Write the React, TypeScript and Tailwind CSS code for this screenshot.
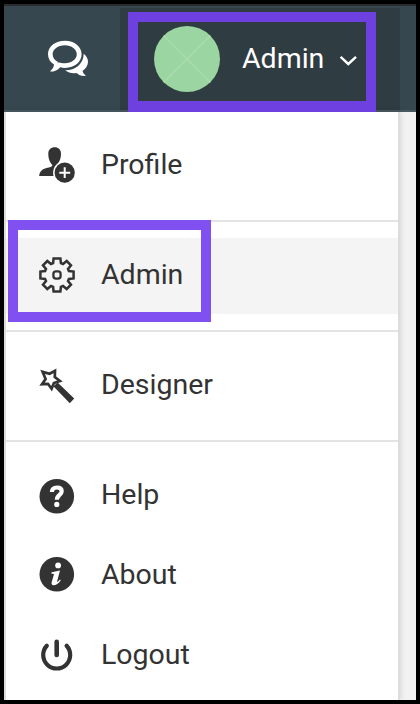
import type { ReactNode } from "react";

const ink = "#333333";

function ChatIcon() {
  return (
    <svg width="42" height="38" viewBox="47 40 42 38" fill="#fff">
      <path
        fillRule="evenodd"
        d="M65 40.8C55.4 40.8 48 46.6 48 54.2C48 58.5 50.2 62.2 54 64.6C53.8 67.4 52.3 69.4 50 71.6C54 71.8 57.6 70.4 60.2 67.2C61.8 67.7 63.4 67.9 65 67.9C74.6 67.9 81.6 61.9 81.6 54.3C81.6 46.7 74.6 40.8 65 40.8ZM64.8 45.3C71.6 45.3 76.8 49.3 76.8 54.3C76.8 59.3 71.6 63.2 64.8 63.2C62.4 63.2 60.5 62.9 58.7 62.2L57.6 63.6L58 62C54.6 60.2 52.6 57.5 52.6 54.3C52.6 49.3 58 45.3 64.8 45.3Z"
      />
      <path d="M83.7 53.8C86.5 56 88 58.8 88 61.8C88 65.3 86 68.6 82.6 70.8C82.8 72.8 84 74.3 86 75.8C82 76.3 78.9 75.2 76.7 73C72.6 74 68.4 72.8 65.2 70.3C75 70.5 83.5 64.5 83.7 53.8Z" />
    </svg>
  );
}

function ProfileIcon() {
  return (
    <svg className="relative -top-px" width="36" height="36" viewBox="39 146.5 36 36" fill={ink}>
      <path d="M54.7 146.7C58.6 146.7 61 149.3 61 153.2C61 157.6 59.5 161.2 57.5 163.4C56 165.5 54.8 168.5 54.2 172L54.1 175.4H39.2C39.5 171 42.4 168.6 46.5 167.5C50 166.6 52.2 166.4 52.4 164.4C50 162.4 48.3 158.2 48.3 153.2C48.3 149.3 50.8 146.7 54.7 146.7Z" />
      <circle cx="64.7" cy="172.2" r="11.6" fill="#fff" />
      <circle cx="64.7" cy="172.2" r="10.1" />
      <path d="M59.3 172.2H70.2M64.7 166.8V177.6" stroke="#fff" strokeWidth="2" />
    </svg>
  );
}

function GearIcon() {
  return (
    <svg className="relative -top-[1.5px]" width="36" height="36" viewBox="0 0 36 36" fill="none" stroke={ink} strokeWidth="2.5">
      <path d="M14.6 1.4H21.4L21.9 6.1L24 7L27.7 4L32 8.3L29 12L29.9 14.1L34.6 14.6V21.4L29.9 21.9L29 24L32 27.7L27.7 32L24 29L21.9 29.9L21.4 34.6H14.6L14.1 29.9L12 29L8.3 32L4 27.7L7 24L6.1 21.9L1.4 21.4V14.6L6.1 14.1L7 12L4 8.3L8.3 4L12 7L14.1 6.1Z" />
      <rect x="14.4" y="14.4" width="7.2" height="7.2" rx="2.6" strokeWidth="2.3" />
    </svg>
  );
}

function WandIcon() {
  return (
    <svg width="36" height="36" viewBox="39 368.5 36 36">
      <path
        d="M42.6 372.4L49.6 374.3L55 371.3L54.8 377.6L59.9 381.5L53.9 383.5L51.6 389.2L48 384.3L42 384.7L45.6 379.5Z"
        fill="none"
        stroke={ink}
        strokeWidth="2.7"
      />
      <path d="M53.4 386.8L57.6 383L74.2 399L69.8 403.8Z" fill={ink} />
    </svg>
  );
}

function HelpIcon() {
  return (
    <svg width="36" height="36" viewBox="0 0 36 36" fill="none">
      <circle cx="17.8" cy="18.3" r="17.3" fill={ink} />
      <path
        d="M12.9 14C13 10.9 15 9.5 18 9.5C21 9.5 22.7 11 22.7 13.3C22.7 17 17.9 16.8 17.9 21.8"
        stroke="#fff"
        strokeWidth="4.2"
      />
      <circle cx="17.8" cy="26.4" r="2.6" fill="#fff" />
    </svg>
  );
}

function AboutIcon() {
  return (
    <svg className="relative -top-[2px]" width="36" height="36" viewBox="0 0 36 36" fill="none">
      <circle cx="17.8" cy="18.3" r="17.3" fill={ink} />
      <circle cx="19.1" cy="9.4" r="2.9" fill="#fff" />
      <path
        d="M12.6 16.2L21 14.4L18.2 25C18 26 18.4 26.1 19.1 25.5L21 23.6L21.7 24.4C19.7 27.4 17 29.2 14.6 29.2C12.8 29.2 12.2 27.8 12.7 26L14.9 18.5C15.1 17.8 14.5 17.6 12.3 17.8Z"
        fill="#fff"
      />
    </svg>
  );
}

function PowerIcon() {
  return (
    <svg className="relative -top-[1.5px]" width="36" height="36" viewBox="39 636.5 36 36" fill="none" stroke={ink} strokeLinecap="round">
      <path d="M46.8 645.3A13.5 13.5 0 1 0 66.6 645.3" strokeWidth="4.2" />
      <path d="M56.7 641.2V654.5" strokeWidth="4.6" />
    </svg>
  );
}

function MenuItem({ icon, label, active = false }: { icon: ReactNode; label: string; active?: boolean }) {
  return (
    <li className={`flex h-[76px] items-center gap-[26px] pl-[33px] ${active ? "bg-[#f4f4f4]" : ""}`}>
      {icon}
      <span className="relative -top-px text-[28.5px] leading-9">{label}</span>
    </li>
  );
}

export default function App() {
  return (
    <div className="relative h-[704px] w-[420px] overflow-hidden bg-black p-1 font-['Roboto',sans-serif] text-[#333]">
      <div className="flex h-[696px] flex-col overflow-hidden bg-[#f2f2f2]">
        <header className="flex h-[108px] shrink-0 border-t-2 border-b-2 border-t-[#2b2b2b] border-b-[#4a5960] bg-[#37474f]">
          <div className="flex w-[116px] items-center pt-[2px] pl-[43px]">
            <ChatIcon />
          </div>
          <div className="mt-[2px] flex w-[280px] items-start bg-[#2f3c42] pl-[34px] text-white">
            <svg className="mt-[18px]" width="66" height="66" viewBox="0 0 66 66">
              <circle cx="33" cy="33" r="33" fill="#9bd5a1" />
              <path d="M9.7 9.7L56.3 56.3M56.3 9.7L9.7 56.3" stroke="#a8dbad" strokeWidth="1.7" />
            </svg>
            <span className="mt-[33px] ml-[22px] text-[28.5px] leading-9">Admin</span>
            <svg className="mt-[46px] ml-[15px]" width="18" height="12" viewBox="0 0 18 12" fill="none" stroke="#fff" strokeWidth="2.4">
              <path d="M1.6 2.8L9.3 10L17 2.8" />
            </svg>
          </div>
        </header>
        <nav className="w-[396px] grow border-x-2 border-[#dcdcdc] bg-white shadow-[0_0_6px_rgba(0,0,0,0.15)]">
          <ul className="border-b-2 border-[#e3e3e3] py-4">
            <MenuItem icon={<ProfileIcon />} label="Profile" />
          </ul>
          <ul className="border-b-2 border-[#e3e3e3] py-4">
            <MenuItem icon={<GearIcon />} label="Admin" active />
          </ul>
          <ul className="border-b-2 border-[#e3e3e3] py-4">
            <MenuItem icon={<WandIcon />} label="Designer" />
          </ul>
          <ul className="flex flex-col gap-1 pt-4">
            <MenuItem icon={<HelpIcon />} label="Help" />
            <MenuItem icon={<AboutIcon />} label="About" />
            <MenuItem icon={<PowerIcon />} label="Logout" />
          </ul>
        </nav>
      </div>
      <div className="absolute top-[12px] left-[128px] h-[100px] w-[248px] border-[10px] border-b-[11px] border-[#6f40e0]" />
      <div className="absolute top-[220px] left-[8px] h-[102px] w-[203px] border-[10px] border-[#8050f0]" />
    </div>
  );
}
